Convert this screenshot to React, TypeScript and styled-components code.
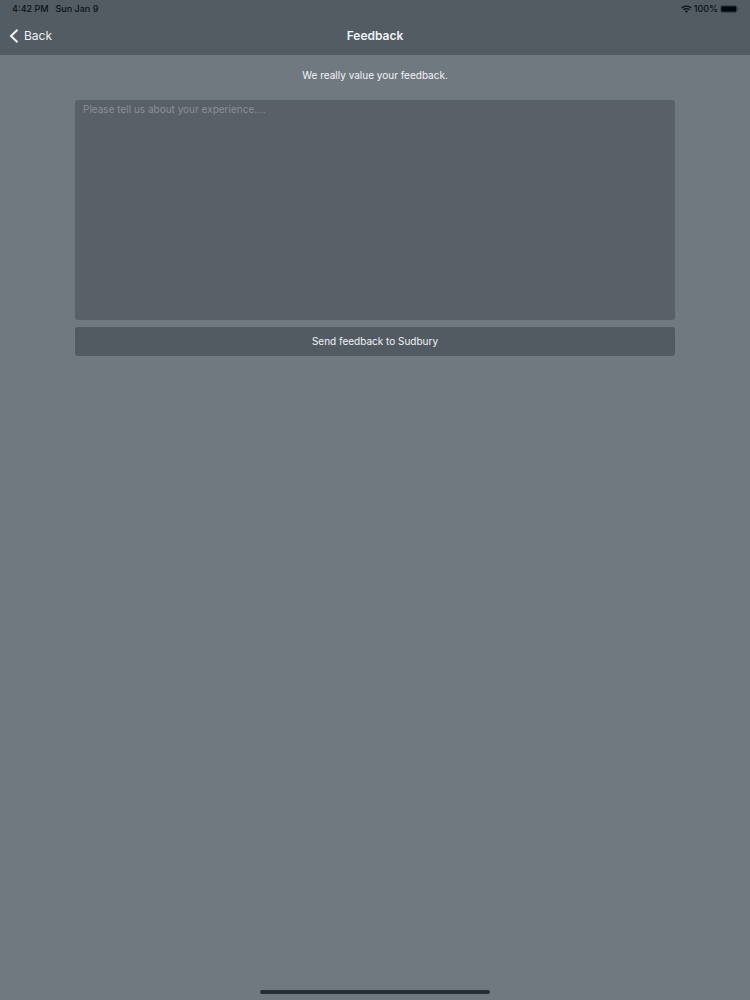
import React, { useState } from "react";
import styled, { createGlobalStyle } from "styled-components";

const GlobalStyle = createGlobalStyle`
  *, *::before, *::after { box-sizing: border-box; }
  body {
    margin: 0;
    background: #717980;
    color: #f1f4f6;
    font-family: Inter, "Liberation Sans", sans-serif;
    font-size: 10px;
  }
`;

const Screen = styled.div`
  min-height: 100vh;
  display: flex;
  flex-direction: column;
`;

const Header = styled.header`
  background: #535b63;
`;

const StatusBar = styled.div`
  display: flex;
  justify-content: space-between;
  height: 18px;
  padding: 0 11px 0 12px;
  color: #0b1118;
  font-size: 9px;
  font-weight: 500;
  line-height: 18px;
`;

const StatusGroup = styled.div<{ $gap: number }>`
  display: flex;
  align-items: center;
  gap: ${({ $gap }) => $gap}px;
`;

const NavBar = styled.nav`
  display: grid;
  grid-template-columns: 1fr auto 1fr;
  align-items: center;
  height: 37px;
  padding: 0 9px 2px;
`;

const BackLink = styled.a`
  display: flex;
  align-items: center;
  justify-self: start;
  gap: 5px;
  color: inherit;
  font-size: 12px;
  line-height: 16px;
  text-decoration: none;
`;

const Title = styled.h1`
  margin: 0;
  font-size: 12px;
  font-weight: 600;
  line-height: 16px;
`;

const Form = styled.form`
  flex: 1;
  display: flex;
  flex-direction: column;
  width: 80%;
  margin: 0 auto;
  padding-top: 12px;
`;

const Intro = styled.label`
  margin-bottom: 17px;
  line-height: 16px;
  text-align: center;
`;

const Message = styled.textarea`
  height: 220px;
  margin-bottom: 7px;
  padding: 1px 8px;
  border: 0;
  border-radius: 3px;
  background: #596067;
  color: inherit;
  font: inherit;
  line-height: 16px;
  resize: none;
  &::placeholder { color: #899097; opacity: 1; }
`;

const SendButton = styled.button`
  height: 29px;
  padding: 0 0 2px;
  border: 0;
  border-radius: 3px;
  background: #535b62;
  color: inherit;
  font: inherit;
  cursor: pointer;
`;

const HomeIndicator = styled.div`
  align-self: center;
  width: 230px;
  height: 4px;
  margin-bottom: 6px;
  border-radius: 2px;
  background: #252e36;
`;

const Chevron = () => (
  <svg width="10" height="16" viewBox="0 0 10 16" fill="none" aria-hidden="true">
    <path d="M8.500 1.700 2 8l6.500 6.300" stroke="currentColor" strokeWidth="2" />
  </svg>
);

const Wifi = () => (
  <svg width="11" height="8" viewBox="0 0 11 8" aria-hidden="true">
    <g fill="none" stroke="currentColor" strokeWidth="1.3">
      <path d="M.6 3.100C3.300.4 7.700.4 10.400 3.100" />
      <path d="M2.400 4.900c1.700-1.700 4.500-1.700 6.200 0" />
    </g>
    <path d="M3.800 6.100c1-.9 2.400-.9 3.400 0L5.500 7.800Z" fill="currentColor" />
  </svg>
);

const Battery = () => (
  <svg width="19" height="8" viewBox="0 0 19 8" aria-hidden="true">
    <rect x=".4" y=".4" width="16.800" height="7.200" rx="2" fill="none" stroke="#343d46" strokeWidth=".7" />
    <rect x="1.200" y="1.200" width="15.200" height="5.600" rx="1.300" fill="#000812" />
    <path d="M18 2.800c1 .4 1 2 0 2.400Z" fill="#343d46" />
  </svg>
);

export default function App() {
  const [message, setMessage] = useState("");
  return (
    <>
      <GlobalStyle />
      <Screen>
        <Header>
          <StatusBar>
            <StatusGroup $gap={7}>
              <span>4:42 PM</span>
              <span>Sun Jan 9</span>
            </StatusGroup>
            <StatusGroup $gap={2}>
              <Wifi />
              <span>100%</span>
              <Battery />
            </StatusGroup>
          </StatusBar>
          <NavBar>
            <BackLink href="#"><Chevron />Back</BackLink>
            <Title>Feedback</Title>
          </NavBar>
        </Header>
        <Form onSubmit={(event) => event.preventDefault()}>
          <Intro htmlFor="feedback">We really value your feedback.</Intro>
          <Message
            id="feedback"
            placeholder="Please tell us about your experience...."
            value={message}
            onChange={(event) => setMessage(event.target.value)}
          />
          <SendButton type="submit">Send feedback to Sudbury</SendButton>
        </Form>
        <HomeIndicator />
      </Screen>
    </>
  );
}
